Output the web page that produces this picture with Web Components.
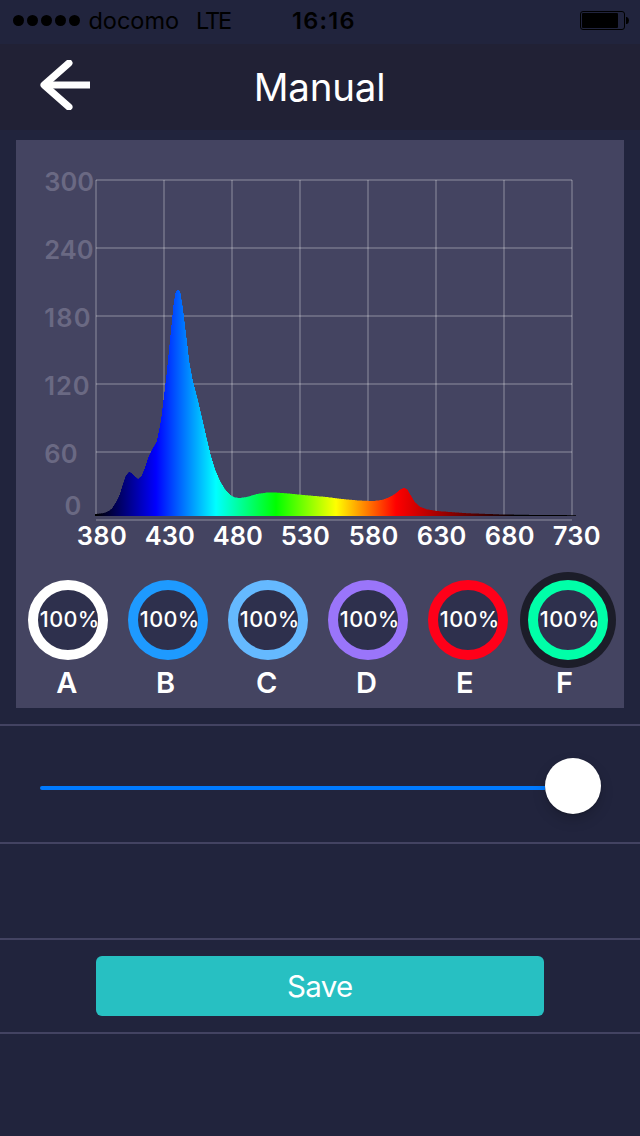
<!DOCTYPE html>
<html lang="en">
<head>
<meta charset="utf-8">
<title>Manual</title>
<style>
  html, body { margin: 0; background: #21243d; }
  body { font-family: Inter, "Liberation Sans", sans-serif; color: #fff; }
</style>
</head>
<body>
<manual-screen></manual-screen>
<script>
const FAMILY = 'Inter, "Liberation Sans", sans-serif';
const ctx = document.createElement('canvas').getContext('2d');

// Letter spacing and left bearing that make a string's ink span `width` px.
function fit(text, size, weight, width) {
  ctx.font = `${weight} ${size}px ${FAMILY}`;
  const m = ctx.measureText(text);
  const ink = m.actualBoundingBoxLeft + m.actualBoundingBoxRight;
  return {
    left: m.actualBoundingBoxLeft,
    spacing: text.length > 1 ? (width - ink) / (text.length - 1) : 0
  };
}

class FitText extends HTMLElement {
  connectedCallback() {
    const size = +this.getAttribute('size');
    const weight = this.getAttribute('weight') || 400;
    const width = +this.getAttribute('width');
    const f = fit(this.textContent, size, weight, width);
    this.attachShadow({ mode: 'open' }).innerHTML = `<style>
      :host { display: block; flex: none; width: ${width}px; white-space: nowrap; line-height: 1.21; }
      span { display: block; margin-left: ${f.left}px; font-size: ${size}px; font-weight: ${weight}; letter-spacing: ${f.spacing}px; }
    </style><span><slot></slot></span>`;
  }
}
customElements.define('fit-text', FitText);

class StatusBar extends HTMLElement {
  connectedCallback() {
    this.attachShadow({ mode: 'open' }).innerHTML = `<style>
      :host { display: flex; align-items: center; box-sizing: border-box; height: 44px; padding: 0 11px 3px 13px; color: #000; }
      svg { display: block; flex: none; }
      fit-text { padding-top: 2px; }
      .carrier { margin-left: 9.5px; } .net { margin-left: 20px; } .time { margin-left: 62px; }
      .battery { margin-left: auto; }
    </style>
    <svg width="67" height="11"><g><circle cx="5.5" cy="5.5" r="5.5"/><circle cx="19.5" cy="5.5" r="5.5"/><circle cx="33.5" cy="5.5" r="5.5"/><circle cx="47.5" cy="5.5" r="5.5"/><circle cx="61.5" cy="5.5" r="5.5"/></g></svg>
    <fit-text class="carrier" size="23.5" weight="400" width="88.5">docomo</fit-text>
    <fit-text class="net" size="23.5" weight="400" width="33">LTE</fit-text>
    <fit-text class="time" size="23.5" weight="600" width="60.5">16:16</fit-text>
    <svg class="battery" width="49" height="19"><rect x=".5" y=".5" width="44" height="18" rx="2.5" fill="none" stroke="#000"/><rect x="2" y="2" width="36" height="15" rx="1"/><path d="M46 6h1q2 1 2 3.500t-2 3.500h-1z"/></svg>`;
  }
}
customElements.define('status-bar', StatusBar);

class NavHeader extends HTMLElement {
  connectedCallback() {
    this.attachShadow({ mode: 'open' }).innerHTML = `<style>
      :host { display: grid; grid-template-columns: 1fr auto 1fr; align-items: center; height: 86px; background: #212135; }
      svg { display: block; margin: 0 0 4px 40px; }
    </style>
    <svg width="50" height="50" viewBox="0 0 50 50" fill="none" stroke="#fff"><path d="M29 3L4 25L29 47" stroke-width="7" stroke-linejoin="round" stroke-linecap="round"/><path d="M4 25H50" stroke-width="7"/></svg>
    <slot></slot>`;
  }
}
customElements.define('nav-header', NavHeader);

class SpectrumChart extends HTMLElement {
  connectedCallback() {
    // Outline of the emission curve, in chart pixels.
    const pts = [[95,514],[100,513.6],[105,512.7],[109,510.800],[112,508.500],[116.7,501],[120,494],[122.3,486],[125.7,476],[129,471.7],[131.7,473],[135,476.7],[138.3,479],[141.7,475.7],[145,467.7],[148.3,457.3],[152.3,449],[156.7,441.7],[159.3,429.3],[161.3,418.3],[163.3,401.7],[164.7,390],[166.7,373],[169.3,346.7],[171.7,323],[173.7,303],[175.7,292],[178,289.3],[180.3,292],[182.7,306.7],[184.7,323.3],[187,341.7],[189.3,361.7],[192.7,380],[198,400.500],[202.7,420.7],[206.7,438.3],[210.7,455],[215,469.3],[220,481],[225,489.3],[230.7,495.3],[235,497.5],[240,498],[246.7,497],[256.7,494],[266.7,492.6],[276.7,492.6],[290,493.6],[300,494.7],[326.7,497],[342,499],[360,500.6],[373.3,501],[381.7,500],[388.3,497.7],[395,494],[400,489.7],[404,487.6],[407.3,489.3],[410.7,495.3],[415,502.3],[420,506.7],[426.7,509.3],[436.7,511],[466.7,513.2],[503,514.5],[540,515],[576,515.2]];
    let d = 'M95 516', k = 0;
    for (let x = 95; x < 576; x++) {
      const c = x + .5;
      while (k < pts.length - 2 && pts[k + 1][0] < c) k++;
      const [x0, y0] = pts[k], [x1, y1] = pts[k + 1];
      d += `V${(y0 + (y1 - y0) * (c - x0) / (x1 - x0)).toFixed(1)}H${x + 1}`;
    }
    d += 'V516Z';

    let grid = '';
    for (let i = 0; i < 6; i++) grid += `<path d="M96 ${180 + 68 * i}H572"/>`;
    for (let i = 0; i < 8; i++) grid += `<path d="M${96 + 68 * i} 180V516"/>`;

    const label = (t, x, y, w) => {
      const f = fit(t, 25.5, 600, w);
      return `<text x="${x + f.left}" y="${y}" letter-spacing="${f.spacing}">${t}</text>`;
    };
    const ys = [['300',45.3,48],['240',45.3,47.5],['180',45.3,44.5],['120',45.3,43.5]].map(([t, x, w], i) => label(t, x, 191 + 68 * i, w)).join('')
      + label('60', 45.3, 463, 31.5) + label('0', 65.5, 515, 15);
    const xs = [['380',48.2],['430',48.4],['480',48.4],['530',47.2],['580',47.8],['630',47.8],['680',48],['730',46]].map(([t, w], i) => label(t, 77.7 + 68 * i, 545, w)).join('');
    const stops = ['#000','#00f','#0ff','#0f0','#ff0','#f00','#800000','#000','#000'].map((c, i) => `<stop offset="${i / 8}" stop-color="${c}"/>`).join('');

    this.attachShadow({ mode: 'open' }).innerHTML = `<style>
      :host { display: block; } svg { display: block; } text { font-size: 25.5px; font-weight: 600; }
    </style>
    <svg width="608" height="440" viewBox="16 140 608 440">
      <defs><linearGradient id="s" gradientUnits="userSpaceOnUse" x1="96" x2="576" y1="0" y2="0">${stops}</linearGradient></defs>
      <g stroke="#fff" stroke-opacity=".2" stroke-width="2">${grid}</g>
      <path d="${d}" fill="url(#s)"/>
      <g fill="#6a6983">${ys}</g><g fill="#fff">${xs}</g>
    </svg>`;
  }
}
customElements.define('spectrum-chart', SpectrumChart);

class ChannelDial extends HTMLElement {
  connectedCallback() {
    const name = this.getAttribute('name');
    const halo = this.hasAttribute('selected') ? 'box-shadow: 0 0 0 8px #1c1d29;' : '';
    this.attachShadow({ mode: 'open' }).innerHTML = `<style>
      :host { display: block; width: 80px; }
      .ring { box-sizing: border-box; width: 80px; height: 80px; border: 10px solid ${this.getAttribute('color')}; border-radius: 50%; background: #2e304d; display: flex; align-items: center; padding: 0 0 2px 2.8px; ${halo} }
      .name { margin: 5px 0 0 ${this.getAttribute('inset')}px; }
    </style>
    <div class="ring"><fit-text size="21.6" weight="500" width="57">100%</fit-text></div>
    <fit-text class="name" size="29" weight="600" width="20">${name}</fit-text>`;
  }
}
customElements.define('channel-dial', ChannelDial);

class LevelSlider extends HTMLElement {
  connectedCallback() {
    this.attachShadow({ mode: 'open' }).innerHTML = `<style>
      :host { display: flex; align-items: center; box-sizing: border-box; height: 116px; padding: 0 39px 0 40px; }
      .track { flex: 1; height: 4px; margin: 8px 0 0; border-radius: 2px 0 0 2px; background: #007aff; }
      .thumb { flex: none; width: 56px; height: 56px; margin: 4px 0 0; border-radius: 50%; background: #fff; box-shadow: 0 6px 13px rgba(0,0,0,.17), 0 1px 2px rgba(0,0,0,.2); }
    </style><div class="track"></div><div class="thumb"></div>`;
  }
}
customElements.define('level-slider', LevelSlider);

class SaveButton extends HTMLElement {
  connectedCallback() {
    this.attachShadow({ mode: 'open' }).innerHTML = `<style>
      :host { display: block; }
      button { display: flex; align-items: center; justify-content: center; width: 448px; height: 60px; margin: 0; border: 0; border-radius: 6px; padding: 2px 0 0; background: #27c0c2; color: inherit; font: inherit; }
    </style><button><slot></slot></button>`;
  }
}
customElements.define('save-button', SaveButton);

class ManualScreen extends HTMLElement {
  connectedCallback() {
    this.attachShadow({ mode: 'open' }).innerHTML = `<style>
      :host { display: flex; flex-direction: column; width: 640px; height: 1136px; overflow: hidden; background: #21243d; }
      .panel { height: 568px; margin: 10px 16px 16px; background: #444461; }
      .dials { display: flex; gap: 20px; padding-left: 12px; }
      .row { box-sizing: border-box; border-top: 2px solid #434362; }
      .level { height: 118px; } .empty { height: 96px; }
      .save { height: 94px; display: flex; justify-content: center; align-items: center; }
      .rest { flex: 1; }
    </style>
    <status-bar></status-bar>
    <nav-header><fit-text size="38.5" weight="400" width="126.5">Manual</fit-text></nav-header>
    <div class="panel">
      <spectrum-chart></spectrum-chart>
      <div class="dials">
        <channel-dial name="A" inset="28.2" color="#fff"></channel-dial>
        <channel-dial name="B" inset="30" color="#1e9aff"></channel-dial>
        <channel-dial name="C" inset="29" color="#65b9ff"></channel-dial>
        <channel-dial name="D" inset="30" color="#9a75fa"></channel-dial>
        <channel-dial name="E" inset="30" color="#ff0019"></channel-dial>
        <channel-dial name="F" inset="30" color="#00ffa8" selected></channel-dial>
      </div>
    </div>
    <div class="row level"><level-slider></level-slider></div>
    <div class="row empty"></div>
    <div class="row save"><save-button><fit-text size="29.500" weight="400" width="64">Save</fit-text></save-button></div>
    <div class="row rest"></div>`;
  }
}
customElements.define('manual-screen', ManualScreen);
</script>
</body>
</html>
